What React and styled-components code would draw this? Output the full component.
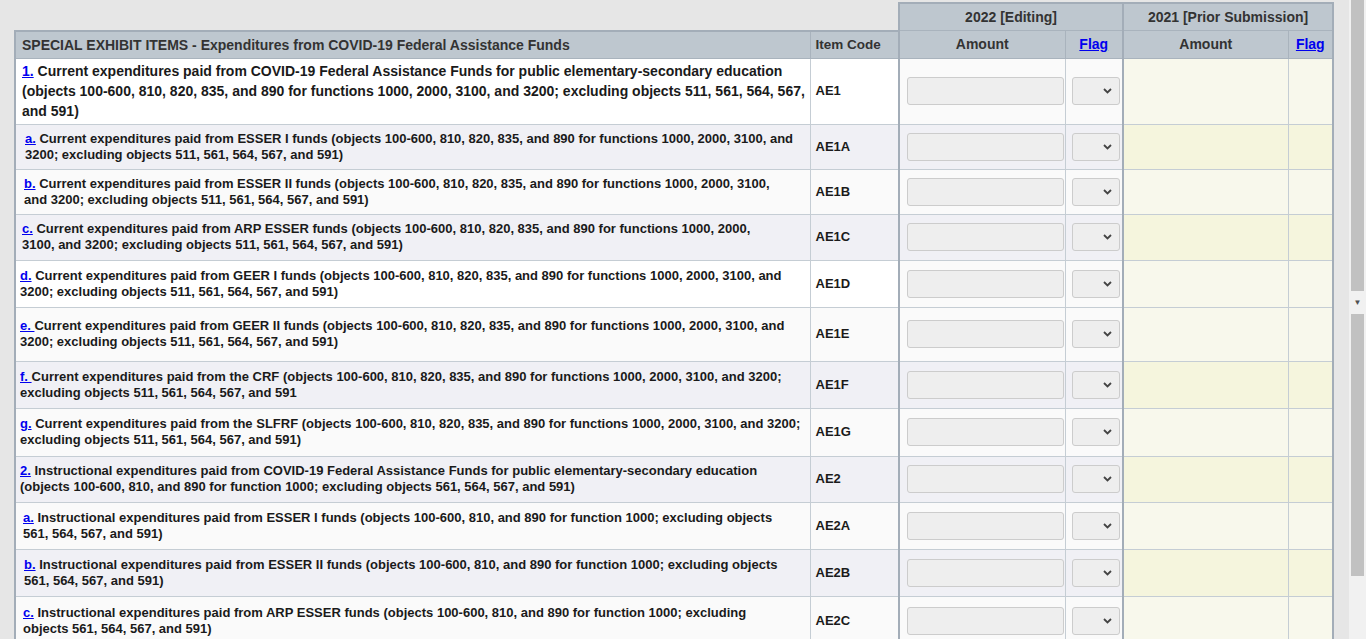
import React from "react";
import styled, { createGlobalStyle } from "styled-components";

const GlobalStyle = createGlobalStyle`
  html, body {
    margin: 0;
    padding: 0;
    height: 639px;
    overflow: hidden;
    background: #e6e6e6;
    font-family: "Liberation Sans", Arial, sans-serif;
  }
`;

const Screen = styled.div`
  display: flex;
  height: 639px;
`;

const Main = styled.div`
  flex: 1;
  padding: 2px 0 0 14px;
  overflow: hidden;
`;

const ScrollTrack = styled.div`
  width: 17px;
  background: #f1f1f1;
  display: flex;
  flex-direction: column;
  align-items: center;
`;

const Thumb = styled.div`
  width: 13px;
  height: ${(p) => p.h}px;
  background: #c1c1c1;
`;

const Arrow = styled.div`
  height: 23px;
  display: flex;
  align-items: center;
  justify-content: center;
  color: #505050;
  font-size: 8px;
`;

const Table = styled.table`
  width: 1320px;
  table-layout: fixed;
  border-collapse: collapse;
  font-size: 13px;
  font-weight: bold;
  color: #1a1a1a;
`;

const Blank = styled.th`
  border: none;
  background: transparent;
`;

const Head = styled.th`
  background: #bec7cf;
  color: #333;
  height: 26px;
  padding: 0 6px;
  text-align: ${(p) => p.align || "center"};
  font-weight: bold;
  font-size: ${(p) => p.fs || 14}px;
  border: 1px solid #a9b3bd;
  border-top: ${(p) => (p.top ? "2px solid #a3adb8" : "1px solid #a9b3bd")};
  border-left: ${(p) => (p.thick ? "2px solid #a3adb8" : "1px solid #a9b3bd")};
  border-right: ${(p) => (p.edge ? "2px solid #a3adb8" : "1px solid #a9b3bd")};
`;

const Row = styled.tr`
  height: ${(p) => p.h}px;
`;

const Cell = styled.td`
  background: ${(p) =>
    p.prior
      ? p.dark
        ? "#f5f5dd"
        : "#f8f8ec"
      : p.dark
      ? "#f0f0f5"
      : p.white
      ? "#ffffff"
      : "#fafafa"};
  border: 1px solid #c5cdd4;
  border-left: ${(p) => (p.thick ? "2px solid #a3adb8" : "1px solid #c5cdd4")};
  border-right: ${(p) => (p.edge ? "2px solid #a3adb8" : "1px solid #c5cdd4")};
  padding: ${(p) => p.pad || "0 6px"};
  vertical-align: middle;
  font-size: ${(p) => p.fs || 13}px;
  line-height: ${(p) => p.lh || 16}px;
`;

const Line = styled.div`
  white-space: nowrap;
`;

const Link = styled.a`
  color: #0000ee;
  text-decoration: underline;
  cursor: pointer;
`;

const Amount = styled.input`
  box-sizing: border-box;
  display: block;
  width: 157px;
  height: 28px;
  background: #eeeeee;
  border: 1px solid #cccccc;
  border-radius: 3px;
  margin: 0;
`;

const SelectWrap = styled.div`
  position: relative;
  width: 48px;
  height: 28px;
`;

const Select = styled.select`
  box-sizing: border-box;
  width: 48px;
  height: 28px;
  background: #eeeeee;
  border: 1px solid #cccccc;
  border-radius: 3px;
  appearance: none;
`;

const Chevron = styled.svg`
  position: absolute;
  right: 8px;
  top: 11px;
  pointer-events: none;
`;

const rows = [
  {
    code: "AE1", h: 66, lh: 20, fs: 14, white: true, link: "1.",
    lines: [
      " Current expenditures paid from COVID-19 Federal Assistance Funds for public elementary-secondary education",
      "(objects 100-600, 810, 820, 835, and 890 for functions 1000, 2000, 3100, and 3200; excluding objects 511, 561, 564, 567,",
      "and 591)",
    ],
  },
  {
    code: "AE1A", h: 45, dark: true, link: "a.", indent: 3,
    lines: [
      " Current expenditures paid from ESSER I funds (objects 100-600, 810, 820, 835, and 890 for functions 1000, 2000, 3100, and",
      "3200; excluding objects 511, 561, 564, 567, and 591)",
    ],
  },
  {
    code: "AE1B", h: 45, link: "b.", indent: 2,
    lines: [
      " Current expenditures paid from ESSER II funds (objects 100-600, 810, 820, 835, and 890 for functions 1000, 2000, 3100,",
      "and 3200; excluding objects 511, 561, 564, 567, and 591)",
    ],
  },
  {
    code: "AE1C", h: 46, dark: true, link: "c.",
    lines: [
      " Current expenditures paid from ARP ESSER funds (objects 100-600, 810, 820, 835, and 890 for functions 1000, 2000,",
      "3100, and 3200; excluding objects 511, 561, 564, 567, and 591)",
    ],
  },
  {
    code: "AE1D", h: 47, white: true, link: "d.", indent: -2,
    lines: [
      " Current expenditures paid from GEER I funds (objects 100-600, 810, 820, 835, and 890 for functions 1000, 2000, 3100, and",
      "3200; excluding objects 511, 561, 564, 567, and 591)",
    ],
  },
  {
    code: "AE1E", h: 54, link: "e. ", indent: -2,
    lines: [
      "Current expenditures paid from GEER II funds (objects 100-600, 810, 820, 835, and 890 for functions 1000, 2000, 3100, and",
      "3200; excluding objects 511, 561, 564, 567, and 591)",
    ],
  },
  {
    code: "AE1F", h: 47, dark: true, link: "f. ", indent: -2,
    lines: [
      "Current expenditures paid from the CRF (objects 100-600, 810, 820, 835, and 890 for functions 1000, 2000, 3100, and 3200;",
      "excluding objects 511, 561, 564, 567, and 591",
    ],
  },
  {
    code: "AE1G", h: 48, link: "g.", indent: -2,
    lines: [
      " Current expenditures paid from the SLFRF (objects 100-600, 810, 820, 835, and 890 for functions 1000, 2000, 3100, and 3200;",
      "excluding objects 511, 561, 564, 567, and 591)",
    ],
  },
  {
    code: "AE2", h: 46, dark: true, link: "2.", indent: -2,
    lines: [
      " Instructional expenditures paid from COVID-19 Federal Assistance Funds for public elementary-secondary education",
      "(objects 100-600, 810, and 890 for function 1000; excluding objects 561, 564, 567, and 591)",
    ],
  },
  {
    code: "AE2A", h: 47, link: "a.", indent: 1,
    lines: [
      " Instructional expenditures paid from ESSER I funds (objects 100-600, 810, and 890 for function 1000; excluding objects",
      "561, 564, 567, and 591)",
    ],
  },
  {
    code: "AE2B", h: 47, dark: true, link: "b.", indent: 2,
    lines: [
      " Instructional expenditures paid from ESSER II funds (objects 100-600, 810, and 890 for function 1000; excluding objects",
      "561, 564, 567, and 591)",
    ],
  },
  {
    code: "AE2C", h: 50, link: "c.", indent: 1,
    lines: [
      " Instructional expenditures paid from ARP ESSER funds (objects 100-600, 810, and 890 for function 1000; excluding",
      "objects 561, 564, 567, and 591)",
    ],
  },
];

const FlagSelect = () => (
  <SelectWrap>
    <Select defaultValue="">
      <option value=""></option>
    </Select>
    <Chevron width="9" height="6" viewBox="0 0 9 6">
      <path d="M1 1l3.5 3.5L8 1" fill="none" stroke="#444" strokeWidth="1.8" />
    </Chevron>
  </SelectWrap>
);

const ItemRow = ({ r }) => (
  <Row h={r.h}>
    <Cell
      dark={r.dark}
      white={r.white}
      lh={r.lh}
      fs={r.fs}
      pad={`0 4px 0 ${6 + (r.indent || 0)}px`}
      style={{ borderLeft: "2px solid #a3adb8" }}
    >
      {r.lines.map((line, i) => (
        <Line key={i}>
          {i === 0 && <Link>{r.link}</Link>}
          {line}
        </Line>
      ))}
    </Cell>
    <Cell dark={r.dark} white={r.white} pad="0 5px">{r.code}</Cell>
    <Cell dark={r.dark} thick pad="0 7px">
      <Amount type="text" />
    </Cell>
    <Cell dark={r.dark} pad="0 6px">
      <FlagSelect />
    </Cell>
    <Cell prior dark={r.dark} thick />
    <Cell prior dark={r.dark} edge />
  </Row>
);

export default function App() {
  return (
    <>
      <GlobalStyle />
      <Screen>
        <Main>
          <Table>
            <colgroup>
              <col style={{ width: 795 }} />
              <col style={{ width: 89 }} />
              <col style={{ width: 166 }} />
              <col style={{ width: 58 }} />
              <col style={{ width: 165 }} />
              <col style={{ width: 45 }} />
            </colgroup>
            <thead>
              <tr>
                <Blank colSpan={2} />
                <Head colSpan={2} top thick>2022 [Editing]</Head>
                <Head colSpan={2} top thick edge>2021 [Prior Submission]</Head>
              </tr>
              <tr>
                <Head align="left" top style={{ borderLeft: "2px solid #a3adb8" }}>
                  SPECIAL EXHIBIT ITEMS - Expenditures from COVID-19 Federal Assistance Funds
                </Head>
                <Head align="left" top fs={13.5} style={{ paddingLeft: 5 }}>Item Code</Head>
                <Head thick>Amount</Head>
                <Head><Link>Flag</Link></Head>
                <Head thick>Amount</Head>
                <Head edge><Link>Flag</Link></Head>
              </tr>
            </thead>
            <tbody>
              {rows.map((r) => (
                <ItemRow key={r.code} r={r} />
              ))}
            </tbody>
          </Table>
        </Main>
        <ScrollTrack>
          <Thumb h={291} />
          <Arrow>▼</Arrow>
          <Thumb h={262} />
        </ScrollTrack>
      </Screen>
    </>
  );
}
